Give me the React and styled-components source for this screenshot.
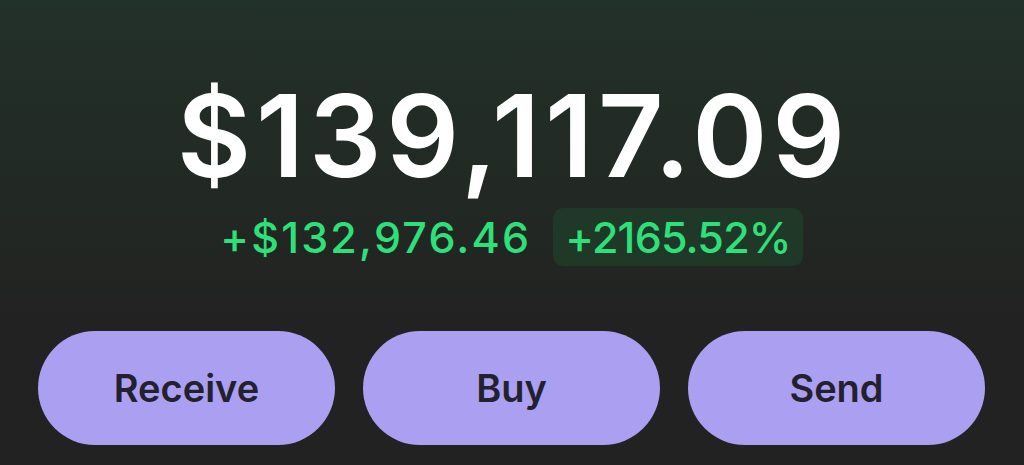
import React from "react";
import styled, { createGlobalStyle } from "styled-components";

const GlobalStyle = createGlobalStyle`
  html, body {
    margin: 0;
    padding: 0;
    background: #222222;
  }
  body {
    font-family: Inter, "Noto Sans", "Liberation Sans", sans-serif;
  }
`;

const Screen = styled.div`
  width: 1024px;
  height: 465px;
  box-sizing: border-box;
  background: linear-gradient(180deg, #223129 0%, #222823 45%, #222222 70%, #222222 100%);
  display: flex;
  flex-direction: column;
  align-items: center;
  padding: 76px 39px 0 38px;
  overflow: hidden;
`;

const Balance = styled.div`
  color: #ffffff;
  font-size: 114px;
  font-weight: 600;
  line-height: 120px;
  letter-spacing: 4.8px;
  margin-left: 4px;
`;

const ChangeRow = styled.div`
  display: flex;
  align-items: center;
  gap: 22px;
  margin-top: 12px;
`;

const ChangeValue = styled.span`
  color: #2fe07a;
  font-size: 43px;
  font-weight: 500;
  line-height: 58px;
  letter-spacing: ${(p) => (p.$pill ? "-0.8px" : "2.2px")};
  padding: ${(p) => (p.$pill ? "0 12px" : "0")};
  border-radius: 10px;
  background: ${(p) => (p.$pill ? "#203828" : "transparent")};
`;

const Actions = styled.div`
  align-self: stretch;
  display: grid;
  grid-template-columns: repeat(3, 1fr);
  gap: 28px;
  margin-top: 65px;
`;

const ActionButton = styled.button`
  height: 114px;
  border: none;
  border-radius: 57px;
  background: #ab9ff2;
  color: #24212e;
  font-family: inherit;
  font-size: 38px;
  font-weight: 600;
  cursor: pointer;
`;

export default function App() {
  return (
    <>
      <GlobalStyle />
      <Screen>
        <Balance>$139,117.09</Balance>
        <ChangeRow>
          <ChangeValue>+$132,976.46</ChangeValue>
          <ChangeValue $pill>+2165.52%</ChangeValue>
        </ChangeRow>
        <Actions>
          <ActionButton>Receive</ActionButton>
          <ActionButton>Buy</ActionButton>
          <ActionButton>Send</ActionButton>
        </Actions>
      </Screen>
    </>
  );
}
